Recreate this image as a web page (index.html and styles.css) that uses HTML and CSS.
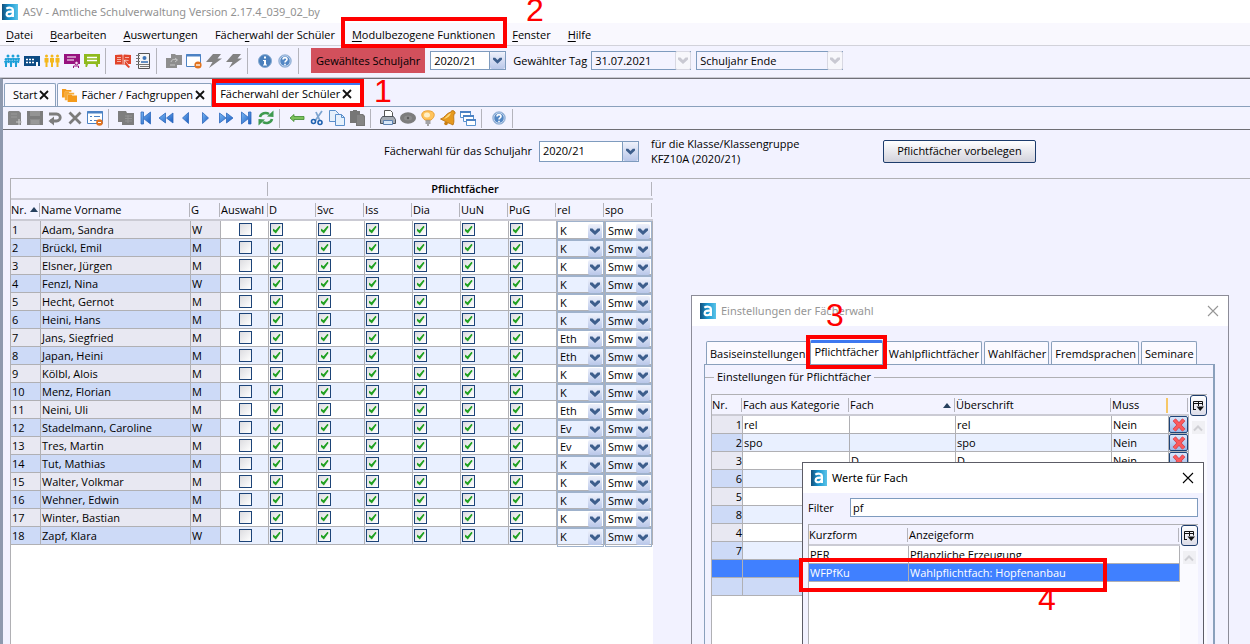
FILE: index.html
```html
<!DOCTYPE html>
<html lang="de">
<head>
<meta charset="utf-8">
<title>ASV - Amtliche Schulverwaltung</title>
<link rel="stylesheet" href="styles.css">
</head>
<body>
<svg class="sprite" aria-hidden="true">
  <defs>
    <linearGradient id="logo-fill" x1="0" y1="0" x2="1" y2="0">
      <stop offset="0" stop-color="#14507c"/><stop offset=".45" stop-color="#1794cf"/><stop offset="1" stop-color="#5cc4e8"/>
    </linearGradient>
    <linearGradient id="blue-fill" x1="0" y1="0" x2="1" y2="1">
      <stop offset="0" stop-color="#7ab8f6"/><stop offset="1" stop-color="#1a5cc0"/>
    </linearGradient>
  </defs>
  <symbol id="logo" viewBox="0 0 16 16"><path fill="url(#logo-fill)" d="M0 0h16v16H0z"/><path fill="none" stroke="#fff" stroke-width="2.2" d="M4.3 4.6c2-1.3 6.600-1.500 6.600 1.600V13M10.600 7.600c-3-.2-6 .1-6 2.600 0 2.900 5.200 2.600 6-.2"/></symbol>
  <symbol id="people" viewBox="0 0 16 16"><g fill="currentColor"><circle cx="4" cy="3" r="1.500"/><circle cx="9" cy="3" r="1.500"/><circle cx="14" cy="3" r="1.500"/><circle cx="2" cy="6.500" r="1.400"/><circle cx="7" cy="6.500" r="1.400"/><circle cx="12" cy="6.500" r="1.400"/><path d="M3 5h3l-1 5H4zM8 5h3l-1 5H9zM13 5h3l-1 5h-1zM0 8h4l-1 3v3H1v-3zM5 8h4l-1 3v3H6v-3zM10 8h4l-1 3v3h-2v-3z"/></g></symbol>
  <symbol id="house" viewBox="0 0 16 16"><path fill="#0c4a84" d="M0 3h16v10H0z"/><path stroke="#fff" stroke-width="1.500" stroke-dasharray="2 1" d="M2 6.500h8M2 9.500h8"/><path fill="#fff" d="M12 9h2v4h-2z"/></symbol>
  <symbol id="group" viewBox="0 0 16 16"><g fill="#f4b81c"><circle cx="2.500" cy="3" r="1.500"/><circle cx="8" cy="3" r="1.500"/><circle cx="13.500" cy="3" r="1.500"/><path d="M.5 5h4v4.500h-1V14h-2V9.500h-1zM6 5h4v4.500H9V14H7V9.500H6zM11.500 5h4v4.500h-1V14h-2V9.500h-1z"/></g></symbol>
  <symbol id="board" viewBox="0 0 16 16"><path fill="#97127f" d="M0 1h16v10H0z"/><path stroke="#fff" d="M3 4h9M3 7h7"/><circle cx="12.500" cy="10" r="1.800" fill="#f4d8ee" stroke="#97127f"/><path fill="none" stroke="#97127f" d="M9.500 15v-2h5v2"/></symbol>
  <symbol id="sign" viewBox="0 0 16 16"><path fill="#8fba1e" d="M0 1h16v10h-2v3h-1.500l-1-3H4l-1 3H1.500v-3H0z"/><path stroke="#fff" stroke-width="1.300" d="M3 4.500h10M3 7.500h10"/></symbol>
  <symbol id="book" viewBox="0 0 16 16"><path fill="#e2442b" d="M0 2l7-.5 1 1 1-1 7 .5v9h-3l2 3-1.500 1L10 11.500H0z"/><path stroke="#fff" stroke-width=".6" d="M2 4.500h4M2 6.500h4M2 8.500h4M10 4.500h4M8 2v9M9.500 7l5 6M9.500 7v4M9.500 7l4 .5"/></symbol>
  <symbol id="notebook" viewBox="0 0 16 16"><path fill="#f6f6f6" stroke="#555" d="M3.500.5h11v15h-11z"/><circle cx="9.500" cy="5" r="2" fill="#3e75b8"/><path stroke="#3e75b8" stroke-width="1.600" d="M6 9h7"/><path stroke="#777" d="M5 11.500h9M5 13.500h9M1 2.500h4M1 5.500h4M1 8.500h4M1 11.500h4"/></symbol>
  <symbol id="folder-gray" viewBox="0 0 16 16"><path fill="#8e8e8e" d="M5 1h4l1 1h6v10h-5v3H0V5h5z"/><path fill="none" stroke="#c6c6c6" d="M5 9c1-3 3-3 6-2M9 5l2.500 2L9 9M4 12h5"/></symbol>
  <symbol id="window-minus" viewBox="0 0 16 16"><path fill="#fff" stroke="#4c82c4" d="M.5 1.500h14v12H.5z"/><path stroke="#4c82c4" stroke-width="2" d="M0 2.500h15"/><circle cx="12" cy="12" r="3.600" fill="#e2731f"/><path stroke="#fff" stroke-width="1.300" d="M10 12h4"/></symbol>
  <symbol id="bolt" viewBox="0 0 16 16"><path fill="#828282" d="M7 1h8l-3.500 4.500H16L3 15l3.500-6H0z"/></symbol>
  <symbol id="info" viewBox="0 0 16 16"><circle cx="8" cy="8" r="6.500" fill="#4a80bd" stroke="#89abd2"/><path stroke="#fff" stroke-width="2" d="M8 3.500v2M8 7v5"/><path stroke="#fff" d="M6 7.500h2M6 12h4"/></symbol>
  <symbol id="help" viewBox="0 0 16 16"><circle cx="8" cy="8" r="6.300" fill="#5387c4" stroke="#a9bfdd"/><circle cx="8" cy="8" r="5.200" fill="none" stroke="#dfe9f6" stroke-width=".8"/><path fill="none" stroke="#fff" stroke-width="1.600" d="M6 6.500c0-2.500 4-2.500 4 0 0 1.500-2 1.300-2 3M8 10.700v1.500"/></symbol>
  <symbol id="doc-gray" viewBox="0 0 16 16"><path fill="#858585" d="M2 1h10l2 2v12H1V2z"/><path stroke="#999" d="M4 4h6M4 7h6"/><path stroke="#c8c8c8" stroke-width="1.200" d="M9 12h6M12 9v6"/></symbol>
  <symbol id="disk" viewBox="0 0 16 16"><path fill="#7d7d7d" d="M0 1h16v14H0z"/><path fill="#949494" d="M3 1h10v5H3z"/><path fill="#8c8c8c" d="M3 9h10v6H3z"/><path stroke="#a5a5a5" d="M4 11h8M4 13h8"/></symbol>
  <symbol id="undo" viewBox="0 0 16 16"><path fill="none" stroke="#7d7d7d" stroke-width="2.800" d="M2 4h7.500c5 0 5 7 0 7H3"/><path fill="#7d7d7d" d="M7 6.500v9L1.500 11z"/></symbol>
  <symbol id="cross" viewBox="0 0 16 16"><path stroke="#7b7b7b" stroke-width="2.800" d="M2.500 2.500l11 11M13.500 2.500l-11 11"/></symbol>
  <symbol id="form-minus" viewBox="0 0 16 16"><path fill="#fff" stroke="#4c82c4" d="M.5 1.500h15v12H.5z"/><path stroke="#4c82c4" stroke-width="2" d="M0 2.500h16"/><path stroke="#4c82c4" d="M3 6.500h2M7 6.500h6M3 10.500h2M7 10.500h3"/><circle cx="12.500" cy="12.500" r="3.300" fill="#e2731f"/><path stroke="#fff" d="M11 12.500h3"/></symbol>
  <symbol id="copy-gray" viewBox="0 0 16 16"><path fill="#7e7e7e" d="M0 1h8l1 2h7v12H4v-3H0z"/><path stroke="#949494" d="M7 6h7M7 8.500h7M7 11h7M10 5v8"/></symbol>
  <symbol id="first" viewBox="0 0 16 16"><path fill="url(#blue-fill)" stroke="#2d68bd" stroke-width=".8" d="M3 2h2.500v5.500L12.500 2v12l-7-5.500V14H3z"/></symbol>
  <symbol id="rewind" viewBox="0 0 16 16"><path fill="url(#blue-fill)" stroke="#2d68bd" stroke-width=".8" d="M7.500 3v10L1 8zM15 3v10L8.500 8z"/></symbol>
  <symbol id="previous" viewBox="0 0 16 16"><path fill="url(#blue-fill)" stroke="#2d68bd" stroke-width=".8" d="M10.500 2.500v11L4.500 8z"/></symbol>
  <symbol id="next" viewBox="0 0 16 16"><path fill="url(#blue-fill)" stroke="#2d68bd" stroke-width=".8" d="M4.500 2.500v11l6-5.500z"/></symbol>
  <symbol id="forward" viewBox="0 0 16 16"><path fill="url(#blue-fill)" stroke="#2d68bd" stroke-width=".8" d="M1.500 3v10L8 8zM8.500 3v10L15 8z"/></symbol>
  <symbol id="last" viewBox="0 0 16 16"><path fill="url(#blue-fill)" stroke="#2d68bd" stroke-width=".8" d="M3.500 2l7 5.500V2H13v12h-2.500V8.500l-7 5.500z"/></symbol>
  <symbol id="refresh" viewBox="0 0 16 16"><path fill="none" stroke="#3f9a50" stroke-width="2.600" d="M2 7c1-4 6-5 9-3M14 9c-1 4-6 5-9 3"/><path fill="#3f9a50" d="M9 6.500L15.500 7V.5zM7 9.500L.5 9v6.500z"/></symbol>
  <symbol id="arrow-left" viewBox="0 0 16 16"><path fill="#7cc25c" stroke="#3e8a2e" stroke-width=".8" d="M1 8l4-3.500v2h10v3H5v2z"/></symbol>
  <symbol id="scissors" viewBox="0 0 16 16"><path stroke="#7ea4d0" stroke-width="1.800" d="M13 1L6 11M7 2l4 9"/><circle cx="4.500" cy="11.500" r="2" fill="none" stroke="#1f62b0" stroke-width="1.600"/><circle cx="11" cy="12.500" r="2" fill="none" stroke="#1f62b0" stroke-width="1.600"/></symbol>
  <symbol id="copy" viewBox="0 0 16 16"><g fill="#e6f0fb" stroke="#5b8fcb"><path d="M.5.5h6l3 3v8h-9z"/><path d="M6.500 4.500h6l3 3v8h-9z"/></g><path fill="none" stroke="#5b8fcb" d="M12.500 4.500v3h3"/></symbol>
  <symbol id="paste" viewBox="0 0 16 16"><path fill="#767676" d="M1 1h3V0h4v1h3v3h3l2 2v10H7v-3H1z"/><path fill="#858585" d="M8 5h5l2 2v8H8z"/></symbol>
  <symbol id="printer" viewBox="0 0 16 16"><path fill="#fff" stroke="#555" d="M4.500.5h6l2 2v5h-8z"/><path fill="#a5abb4" stroke="#4e545c" d="M2.500 6.500h11l2 3v4H.5v-4z"/><path fill="#d8e7f8" stroke="#5c81b0" d="M3.500 10.500h9v4h-9z"/></symbol>
  <symbol id="eye" viewBox="0 0 16 16"><ellipse cx="8" cy="8" rx="8" ry="5.800" fill="#7d7d7d"/><ellipse cx="8" cy="8" rx="4" ry="2.500" fill="#8c8c8c"/><circle cx="8" cy="8" r="1.200" fill="#5c5c5c"/></symbol>
  <symbol id="bulb" viewBox="0 0 16 16"><path fill="#ffc45c" stroke="#e9a136" d="M8 .8c-8 0-7.500 6.200-3 9.200h6c4.500-3 5-9.200-3-9.200z"/><ellipse cx="7" cy="5" rx="3" ry="2.500" fill="#fff0c8"/><path stroke="#888" stroke-width="1.500" d="M5.500 11h5M5.500 13h5M7 15h2"/></symbol>
  <symbol id="bell" viewBox="0 0 16 16"><path fill="#e69a1f" stroke="#b76c08" stroke-width=".8" d="M14 1c2 2 1 3 0 3-1 4 1 7-1 11-2-1-4-2-6-2.500C5 11 3 10.500.5 9 5 8 6 3 11 2c0-1 1-2 3-1z"/><path fill="#ffd87a" d="M11 3C8 4 6 7 4 9c4-1 6-3 7-6z"/><circle cx="6" cy="13.500" r="1.800" fill="#c97d11"/></symbol>
  <symbol id="cascade" viewBox="0 0 16 16"><g fill="#fff" stroke="#5a92d0"><path d="M.5 1.500h10v6H.5z"/><path d="M3.500 5.500h10v6h-10z"/><path d="M6.500 9.500h9v6h-9z"/></g><path stroke="#4c82c4" stroke-width="2" d="M0 2h11M3 6h11M6 10h10"/></symbol>
  <symbol id="folders" viewBox="0 0 16 16"><path fill="#f49a1b" d="M0 1h4l1 1h5v2H3v6H0z"/><path fill="#f7ab35" d="M3 4h4l1 1h5v2H6v6H3z"/><path fill="#f49a1b" d="M6 7h4l1 1h5v7H6z"/></symbol>
  <symbol id="close-tab" viewBox="0 0 10 10"><path stroke="#111" stroke-width="1.800" d="M1 1l8 8M9 1L1 9"/></symbol>
  <symbol id="close-window" viewBox="0 0 12 12"><path stroke="currentColor" stroke-width="1.100" d="M1 1l10 10M11 1L1 11"/></symbol>
  <symbol id="chevron" viewBox="0 0 10 8"><path fill="currentColor" d="M0 1h2.500L5 3.500 7.500 1H10v2L5 7.500 0 3z"/></symbol>
  <symbol id="scroll-up" viewBox="0 0 10 8"><path fill="none" stroke="#cfcfd4" stroke-width="2" d="M1 6.500l4-4 4 4"/></symbol>
  <symbol id="sort" viewBox="0 0 8 5"><path fill="#26405e" d="M0 5l4-5 4 5z"/></symbol>
  <symbol id="columns" viewBox="0 0 12 12"><path fill="none" stroke="#111" d="M1.500 9.500v-8h9v4M1.500 3.500h9M6.500 1v5M1 9.500h3"/><path fill="#111" d="M4.500 6.500H12L8.200 11z"/></symbol>
  <symbol id="delete" viewBox="0 0 16 16"><path stroke="#c83545" stroke-width="4.600" d="M2.500 2l11 12M13.500 2l-11 12"/><path stroke="#fb5a5c" stroke-width="3.200" d="M2.500 2l11 12M13.500 2l-11 12"/></symbol>
</svg>

<div class="app">
  <header class="titlebar"><svg class="icon"><use href="#logo"/></svg><span>ASV - Amtliche Schulverwaltung Version 2.17.4_039_02_by</span></header>

  <nav class="menu">
    <button><u>D</u>atei</button>
    <button><u>B</u>earbeiten</button>
    <button><u>A</u>uswertungen</button>
    <button>Fäche<u>r</u>wahl der Schüler</button>
    <button><u>M</u>odulbezogene Funktionen</button>
    <button><u>F</u>enster</button>
    <button><u>H</u>ilfe</button>
  </nav>

  <div class="toolbar main-tools">
    <button class="tool sky" aria-label="Schüler"><svg class="icon"><use href="#people"/></svg></button>
    <button class="tool" aria-label="Schule"><svg class="icon"><use href="#house"/></svg></button>
    <button class="tool" aria-label="Klassen"><svg class="icon"><use href="#group"/></svg></button>
    <button class="tool" aria-label="Unterricht"><svg class="icon"><use href="#board"/></svg></button>
    <button class="tool" aria-label="Fächer"><svg class="icon"><use href="#sign"/></svg></button>
    <i class="sep"></i>
    <button class="tool" aria-label="Katalog"><svg class="icon"><use href="#book"/></svg></button>
    <button class="tool" aria-label="Adressbuch"><svg class="icon"><use href="#notebook"/></svg></button>
    <i class="sep"></i>
    <button class="tool" aria-label="Ordner"><svg class="icon"><use href="#folder-gray"/></svg></button>
    <button class="tool" aria-label="Fenster schließen"><svg class="icon"><use href="#window-minus"/></svg></button>
    <button class="tool" aria-label="Verbinden"><svg class="icon"><use href="#bolt"/></svg></button>
    <button class="tool" aria-label="Trennen"><svg class="icon"><use href="#bolt"/></svg></button>
    <i class="sep"></i>
    <button class="tool" aria-label="Info"><svg class="icon"><use href="#info"/></svg></button>
    <button class="tool" aria-label="Hilfe"><svg class="icon"><use href="#help"/></svg></button>
    <i class="sep"></i>
    <label class="year-label" for="year">Gewähltes Schuljahr</label>
    <span class="combo year"><select id="year"><option>2020/21</option></select><svg class="arrow"><use href="#chevron"/></svg></span>
    <label class="day-label" for="day">Gewählter Tag</label>
    <span class="combo off day"><select id="day" disabled><option>31.07.2021</option></select><svg class="arrow"><use href="#chevron"/></svg></span>
    <span class="combo off period"><select aria-label="Zeitpunkt" disabled><option>Schuljahr Ende</option></select><svg class="arrow"><use href="#chevron"/></svg></span>
  </div>

  <main class="workspace">
    <div class="tabs">
      <div class="tab"><button>Start</button><button class="close" aria-label="Start schließen"><svg><use href="#close-tab"/></svg></button></div>
      <div class="tab"><svg class="icon"><use href="#folders"/></svg><button>Fächer / Fachgruppen</button><button class="close" aria-label="Fächer schließen"><svg><use href="#close-tab"/></svg></button></div>
      <div class="tab active"><button>Fächerwahl der Schüler</button><button class="close" aria-label="Fächerwahl schließen"><svg><use href="#close-tab"/></svg></button></div>
    </div>
    <div class="toolbar module-tools">
      <button class="tool" aria-label="Neu"><svg class="icon"><use href="#doc-gray"/></svg></button>
      <button class="tool" aria-label="Speichern"><svg class="icon"><use href="#disk"/></svg></button>
      <button class="tool" aria-label="Rückgängig"><svg class="icon"><use href="#undo"/></svg></button>
      <button class="tool" aria-label="Löschen"><svg class="icon"><use href="#cross"/></svg></button>
      <button class="tool" aria-label="Formular schließen"><svg class="icon"><use href="#form-minus"/></svg></button>
      <i class="sep"></i>
      <button class="tool" aria-label="Liste"><svg class="icon"><use href="#copy-gray"/></svg></button>
      <button class="tool" aria-label="Erster"><svg class="icon"><use href="#first"/></svg></button>
      <button class="tool" aria-label="Zurückspulen"><svg class="icon"><use href="#rewind"/></svg></button>
      <button class="tool" aria-label="Voriger"><svg class="icon"><use href="#previous"/></svg></button>
      <button class="tool" aria-label="Nächster"><svg class="icon"><use href="#next"/></svg></button>
      <button class="tool" aria-label="Vorspulen"><svg class="icon"><use href="#forward"/></svg></button>
      <button class="tool" aria-label="Letzter"><svg class="icon"><use href="#last"/></svg></button>
      <button class="tool" aria-label="Aktualisieren"><svg class="icon"><use href="#refresh"/></svg></button>
      <i class="sep"></i>
      <button class="tool" aria-label="Zurück"><svg class="icon"><use href="#arrow-left"/></svg></button>
      <button class="tool" aria-label="Ausschneiden"><svg class="icon"><use href="#scissors"/></svg></button>
      <button class="tool" aria-label="Kopieren"><svg class="icon"><use href="#copy"/></svg></button>
      <button class="tool" aria-label="Einfügen"><svg class="icon"><use href="#paste"/></svg></button>
      <i class="sep"></i>
      <button class="tool" aria-label="Drucken"><svg class="icon"><use href="#printer"/></svg></button>
      <button class="tool" aria-label="Ansicht"><svg class="icon"><use href="#eye"/></svg></button>
      <button class="tool" aria-label="Hinweis"><svg class="icon"><use href="#bulb"/></svg></button>
      <button class="tool" aria-label="Erinnerung"><svg class="icon"><use href="#bell"/></svg></button>
      <button class="tool" aria-label="Fenster anordnen"><svg class="icon"><use href="#cascade"/></svg></button>
      <i class="sep"></i>
      <button class="tool" aria-label="Modulhilfe"><svg class="icon"><use href="#help"/></svg></button>
      <i class="sep"></i>
    </div>

    <div class="module">
      <div class="selection">
        <label for="choice-year">Fächerwahl für das Schuljahr</label>
        <span class="combo choice"><select id="choice-year"><option>2020/21</option></select><svg class="arrow"><use href="#chevron"/></svg></span>
        <p>für die Klasse/Klassengruppe<br>KFZ10A (2020/21)</p>
        <button class="preset">Pflichtfächer vorbelegen</button>
      </div>
      <div class="grid-pane">
        <div class="grid-body">
          <table class="grid students">
            <colgroup><col class="c-nr"><col class="c-name"><col class="c-sex"><col class="c-sub" span="9"></colgroup>
            <thead>
              <tr class="groups"><th colspan="4"></th><th colspan="8">Pflichtfächer</th></tr>
              <tr><th>Nr.<svg class="sort"><use href="#sort"/></svg></th><th>Name Vorname</th><th>G</th><th>Auswahl</th><th>D</th><th>Svc</th><th>Iss</th><th>Dia</th><th>UuN</th><th>PuG</th><th>rel</th><th>spo</th></tr>
            </thead>
            <tbody id="students"></tbody>
          </table>
        </div>
      </div>
    </div>
  </main>
</div>

<section class="dialog settings" aria-label="Einstellungen der Fächerwahl">
  <header class="dialog-title"><svg class="icon"><use href="#logo"/></svg><span>Einstellungen der Fächerwahl</span><button class="close" aria-label="Schließen"><svg><use href="#close-window"/></svg></button></header>
  <div class="dialog-body">
    <div class="tabs">
      <button class="tab">Basiseinstellungen</button>
      <button class="tab active">Pflichtfächer</button>
      <button class="tab">Wahlpflichtfächer</button>
      <button class="tab">Wahlfächer</button>
      <button class="tab">Fremdsprachen</button>
      <button class="tab">Seminare</button>
    </div>
    <div class="tab-panel">
      <fieldset>
        <legend>Einstellungen für Pflichtfächer</legend>
        <div class="list">
          <table class="grid subjects">
            <colgroup><col class="c-no"><col class="c-cat"><col class="c-subject"><col><col class="c-must"><col class="c-del"></colgroup>
            <thead><tr><th>Nr.</th><th>Fach aus Kategorie</th><th>Fach<svg class="sort"><use href="#sort"/></svg></th><th>Überschrift</th><th class="resizing">Muss</th><th></th></tr></thead>
            <tbody id="subjects"></tbody>
          </table>
          <div class="scroll"><button class="columns" aria-label="Spalten"><svg><use href="#columns"/></svg></button><button class="up" aria-label="Nach oben"><svg><use href="#scroll-up"/></svg></button></div>
        </div>
      </fieldset>
    </div>
  </div>
</section>

<section class="dialog values" aria-label="Werte für Fach">
  <header class="dialog-title"><svg class="icon"><use href="#logo"/></svg><span>Werte für Fach</span><button class="close" aria-label="Schließen"><svg><use href="#close-window"/></svg></button></header>
  <div class="dialog-body">
    <div class="filter"><label for="filter">Filter</label><input id="filter" type="text" value="pf" autofocus></div>
    <div class="list">
      <table class="grid">
        <colgroup><col class="c-short"><col></colgroup>
        <thead><tr><th>Kurzform</th><th>Anzeigeform</th></tr></thead>
        <tbody>
          <tr><td>PER</td><td>Pflanzliche Erzeugung</td></tr>
          <tr class="selected"><td>WFPfKu</td><td>Wahlpflichtfach: Hopfenanbau</td></tr>
        </tbody>
      </table>
      <div class="scroll"><button class="columns" aria-label="Spalten"><svg><use href="#columns"/></svg></button><button class="up" aria-label="Nach oben"><svg><use href="#scroll-up"/></svg></button></div>
    </div>
  </div>
</section>

<div class="mark mark-1"></div><span class="step step-1">1</span>
<div class="mark mark-2"></div><span class="step step-2">2</span>
<div class="mark mark-3"></div><span class="step step-3">3</span>
<div class="mark mark-4"></div><span class="step step-4">4</span>

<script src="app.js"></script>
</body>
</html>
```
FILE: styles.css
```css
* { box-sizing: border-box; }
body {
  margin: 0;
  height: 100vh;
  overflow: hidden;
  position: relative;
  background: #f2f2ff;
  color: #000;
  font: 11px/16px "Open Sans", "Noto Sans", sans-serif;
}
button, select, input {
  font: inherit;
  color: inherit;
  margin: 0;
  padding: 0;
  border: 0;
  border-radius: 0;
  background: none;
}
p { margin: 0; }
.sprite { position: absolute; width: 0; height: 0; }
.icon { width: 16px; height: 16px; flex: none; display: block; }
.app { display: flex; flex-direction: column; height: 100%; }

.titlebar {
  display: flex;
  align-items: center;
  gap: 5px;
  height: 23px;
  padding-left: 2px;
  background: #fff;
  color: #929292;
  font-family: "Noto Sans", "Open Sans", sans-serif;
}
.menu {
  display: flex;
  align-items: center;
  gap: 17px;
  height: 23px;
  padding: 1px 0 0 6px;
  background: #f9f8fe;
  border-bottom: 1px solid #d2d2da;
}
.menu button { white-space: nowrap; }
.menu u { text-underline-offset: 2px; }

.toolbar { display: flex; align-items: center; gap: 4px; background: #f3f3ff; }
.main-tools { height: 32px; padding: 0 0 2px 4px; border-bottom: 1px solid #c9c9d2; }
.module-tools { height: 23px; padding-left: 4px; border-bottom: 1px solid #6e6e74; }
.tool { flex: none; width: 16px; }
.sky { color: #1ea0d8; }
.sep { width: 1px; height: 26px; margin: 0 5px 0 1px; background: #b4b4bc; }
.module-tools .sep { height: 19px; }

.year-label {
  height: 25px;
  margin-left: 3px;
  padding: 0 5px;
  background: #d2505c;
  line-height: 26px;
  text-align: center;
  white-space: nowrap;
}
.day-label { margin-left: 3px; white-space: nowrap; }

.combo { display: grid; grid-template-columns: 1fr 16px; align-items: center; height: 19px; }
.combo select {
  grid-area: 1 / 1 / 2 / 3;
  appearance: none;
  width: 100%;
  height: 100%;
  padding-left: 3px;
  background: linear-gradient(#7e9bbe, #7e9bbe) right 15px top / 1px 100% no-repeat, #fff;
  border: 1px solid #7e9bbe;
  opacity: 1;
}
.arrow {
  grid-area: 1 / 2;
  width: 15px;
  height: 17px;
  padding: 4px 3px;
  pointer-events: none;
  color: #3d5e8c;
  background: linear-gradient(#eef1fb, #b9c7e9);
  border-radius: 2px;
}
.off select { background: #f3f3ff; color: #000; }
.off .arrow { color: #c9c9d2; background: #f7f7fb; border: 1px solid #d8d8e2; padding: 3px 2px; width: 16px; height: 19px; }
.year { width: 76px; margin-left: 1px; }
.day { width: 100px; }
.period { width: 147px; margin-left: 1px; }
.choice { width: 100px; height: 21px; }
.choice .arrow { height: 19px; padding: 5px 3px; }

.workspace {
  flex: 1;
  display: flex;
  flex-direction: column;
  min-height: 0;
  border-top: 1px solid #707078;
  border-left: 3px solid #8e99ae;
}
.tabs { display: flex; align-items: flex-end; gap: 2px; border-bottom: 1px solid #8aa0bc; }
.tab {
  display: flex;
  align-items: center;
  gap: 2px;
  height: 23px;
  background: #fbfaff;
  border: 1px solid #8aa0bc;
  border-bottom: 0;
  border-radius: 2px 2px 0 0;
  white-space: nowrap;
}
.workspace > .tabs { height: 28px; gap: 1px; padding-left: 1px; flex: none; }
.workspace .tab { padding: 0 6px 0 8px; }
.workspace .tab .icon { width: 15px; height: 15px; margin: 0 2px 0 -4px; }
.tab.active { border-top: 3px solid #3d78f0; background: #fff; }
.workspace .tab.active { height: 24px; padding: 0 8px 4px 6px; }
.close { display: flex; }
.tab .close svg { width: 10px; height: 10px; }

.module { flex: 1; display: flex; flex-direction: column; padding-left: 7px; min-height: 0; }
.selection { display: flex; align-items: center; gap: 7px; height: 48px; padding: 0 214px 6px 374px; white-space: nowrap; }
.selection p { margin-left: 5px; line-height: 15px; }
.preset {
  width: 153px;
  height: 23px;
  margin-left: auto;
  border: 1px solid #1d3c6c;
  border-radius: 2px;
  background: linear-gradient(#fff, #d2d2dc);
}
.grid-pane { flex: 1; border: solid #b0b0b4; border-width: 1px 0 0 1px; overflow: hidden; }
.grid-body { width: 642px; height: 100%; background: #fff; }

.grid { width: 100%; table-layout: fixed; border-collapse: separate; border-spacing: 0; background: #fff; }
.grid th {
  height: 21px;
  padding: 1px 0 0;
  font-weight: 400;
  line-height: 18px;
  text-align: left;
  white-space: nowrap;
  background: linear-gradient(#b4b4bc, #b4b4bc) right 1px top 3px / 1px 14px no-repeat, #f3f3ff;
  border-bottom: 2px solid #cbcbd4;
}
.grid td {
  height: 18px;
  padding: 0 0 0 1px;
  line-height: 17px;
  white-space: nowrap;
  border-right: 1px solid #b0b0b4;
  border-bottom: 1px solid #b0b0b4;
}
.grid tbody tr:nth-child(even) td { background: #e9f0ff; }
.sort { width: 8px; height: 5px; margin-left: 3px; vertical-align: 2px; }
.students .groups th { padding-left: 8px; font-weight: 600; text-align: center; }
.students td:nth-child(-n+3) { background: #e8e8f2; }
.grid.students tbody tr:nth-child(even) td:nth-child(-n+3) { background: #cddaf7; }
.c-nr { width: 30px; }
.c-name { width: 150px; }
.c-sex { width: 30px; }
.c-sub { width: 48px; }
.students td:nth-child(4) { text-align: center; }
.check {
  appearance: none;
  display: inline-grid;
  place-items: center;
  width: 13px;
  height: 13px;
  border: 1px solid #1d4478;
  background: linear-gradient(135deg, #dcdce0, #fff);
  vertical-align: top;
  margin-top: 2px;
}
.check:checked::before {
  content: "";
  width: 8px;
  height: 8px;
  background: #21a121;
  clip-path: polygon(0 35%, 38% 60%, 90% 0, 100% 18%, 42% 100%, 0 62%);
}
.students .combo { height: 17px; margin-left: -1px; }
.students .combo select { border-color: #9fb2cc; padding: 0 0 1px 2px; background: none; }
.students .arrow { height: 15px; padding: 3px 2px; width: 14px; }

.dialog { position: absolute; display: flex; flex-direction: column; background: #f2f2ff; border: 1px solid #8c8c98; border-bottom: 0; }
.dialog-title { display: flex; align-items: center; gap: 5px; height: 30px; padding: 0 9px 0 8px; background: #fff; font-family: "Noto Sans", "Open Sans", sans-serif; }
.dialog-title .close { margin-left: auto; }
.dialog-title .close svg { width: 12px; height: 12px; }
.settings { top: 295px; right: 21px; bottom: 0; width: 538px; }
.settings .dialog-title { color: #969696; }
.settings .dialog-body { flex: 1; display: flex; flex-direction: column; padding: 14px 13px 0 12px; min-height: 0; }
.settings .tabs { padding-left: 2px; border: 0; height: 24px; flex: none; }
.settings .tab { padding: 2px 2px 0 3px; }
.settings .tab.active { height: 24px; padding: 0 3px 4px; }
.tab-panel { flex: 1; border: solid #8aa0bc; border-width: 1px 2px 0 1px; min-height: 0; }
fieldset { display: flex; flex-direction: column; height: 100%; margin: 4px 0 0; padding: 9px 6px 0; border: 0 solid #b0b0b4; border-top-width: 1px; min-width: 0; }
legend { margin-left: 3px; padding: 0 3px; }
.list { flex: 1; display: flex; min-height: 0; border-top: 1px solid #b0b0b4; border-left: 1px solid #b0b0b4; background: #fff; }
.list table { flex: 1; align-self: flex-start; }
.scroll { flex: none; display: flex; flex-direction: column; align-items: center; gap: 5px; width: 18px; background: #fafaff; }
.columns { display: flex; align-items: center; justify-content: center; width: 17px; height: 21px; border: 1px solid #1d3c6c; border-radius: 3px; background: linear-gradient(#fff, #dcdce8); }
.columns svg { width: 12px; height: 12px; }
.up { display: flex; align-items: center; justify-content: center; width: 13px; height: 13px; background: #f0f0f4; }
.up svg { width: 10px; height: 8px; }
.c-no { width: 31px; }
.c-cat { width: 107px; }
.c-subject { width: 106px; }
.c-must { width: 57px; }
.c-del { width: 20px; }
.subjects td:first-child { text-align: right; background: #e8e8f2; }
.grid.subjects tbody tr:nth-child(even) td:first-child { background: #cddaf7; }
.subjects th:nth-child(3) .sort { float: right; margin: 7px 5px 0 0; }
.grid .resizing { background: linear-gradient(#f6c768, #f6c768) right 1px top 3px / 2px 15px no-repeat, #f3f3ff; }
.grid tbody tr.selected td { background: #4080ff; color: #fff; }
.grid.subjects tbody tr.selected td:first-child { background: #4080ff; }
.grid.subjects tbody tr.blank td { background: #cddaf7; }
.delete { display: block; width: 19px; height: 17px; margin-left: -1px; border: 1px solid #1d4478; border-radius: 2px; background: linear-gradient(#dbe6fb, #9cb8e6); }
.delete svg { display: block; width: 14px; height: 14px; margin: 0 auto; }

.values { top: 462px; right: 46px; bottom: 0; width: 402px; border-color: #5c5c66; }
.values .dialog-body { flex: 1; display: flex; flex-direction: column; gap: 7px; padding: 5px 5px 0; min-height: 0; }
.filter { display: flex; align-items: center; }
.filter label { width: 42px; }
.filter input { flex: 1; min-width: 0; height: 19px; padding: 0 2px; border: 1px solid #7e9bbe; background: #fff; outline: none; }
.c-short { width: 100px; }

.mark { position: absolute; border: 4px solid #f00; pointer-events: none; }
.mark-1 { left: 212px; top: 79px; width: 152px; height: 28px; }
.mark-2 { left: 341px; top: 17px; width: 166px; height: 31px; }
.mark-3 { left: 806px; top: 335px; width: 81px; height: 34px; }
.mark-4 { left: 799px; top: 558px; width: 308px; height: 34px; }
.step { position: absolute; color: #f00; font: 32px/32px "Liberation Sans", sans-serif; }
.step-1 { left: 374px; top: 75px; }
.step-2 { left: 526px; top: -6px; }
.step-3 { left: 826px; top: 299px; }
.step-4 { left: 1038px; top: 583px; }
```
FILE: app.js
```js
const students = [
  ["Adam, Sandra", "W", "K"], ["Brückl, Emil", "M", "K"], ["Elsner, Jürgen", "M", "K"],
  ["Fenzl, Nina", "W", "K"], ["Hecht, Gernot", "M", "K"], ["Heini, Hans", "M", "K"],
  ["Jans, Siegfried", "M", "Eth"], ["Japan, Heini", "M", "Eth"], ["Kölbl, Alois", "M", "K"],
  ["Menz, Florian", "M", "K"], ["Neini, Uli", "M", "Eth"], ["Stadelmann, Caroline", "W", "Ev"],
  ["Tres, Martin", "M", "Ev"], ["Tut, Mathias", "M", "K"], ["Walter, Volkmar", "M", "K"],
  ["Wehner, Edwin", "M", "K"], ["Winter, Bastian", "M", "K"], ["Zapf, Klara", "W", "K"]
];
const required = ["D", "Svc", "Iss", "Dia", "UuN", "PuG"];

const combo = (label, value) =>
  `<td><span class="combo"><select aria-label="${label}"><option>${value}</option></select><svg class="arrow"><use href="#chevron"/></svg></span></td>`;

document.getElementById("students").innerHTML = students.map(([name, sex, religion], i) =>
  `<tr><td>${i + 1}</td><td>${name}</td><td>${sex}</td>` +
  `<td><input class="check" type="checkbox" aria-label="Auswahl ${name}"></td>` +
  required.map(s => `<td><input class="check" type="checkbox" checked aria-label="${s} ${name}"></td>`).join("") +
  combo(`Religion ${name}`, religion) + combo(`Sport ${name}`, "Smw") + "</tr>"
).join("");

const subjects = [
  [1, "rel", "", "rel"], [2, "spo", "", "spo"], [3, "", "D", "D"], [6, "", "", ""],
  [5, "", "", ""], [8, "", "", ""], [4, "", "", ""], [7, "", "", ""]
];
const remove = `<button class="delete" aria-label="Zeile löschen"><svg><use href="#delete"/></svg></button>`;

document.getElementById("subjects").innerHTML = subjects.map(([nr, category, subject, heading]) =>
  `<tr><td>${nr}</td><td>${category}</td><td>${subject}</td><td>${heading}</td><td>${heading ? "Nein" : ""}</td><td>${heading ? remove : ""}</td></tr>`
).join("") +
  `<tr class="selected">${"<td></td>".repeat(6)}</tr><tr class="blank">${"<td></td>".repeat(6)}</tr>`;

const filter = document.getElementById("filter");
filter.focus();
filter.setSelectionRange(2, 2);
```
